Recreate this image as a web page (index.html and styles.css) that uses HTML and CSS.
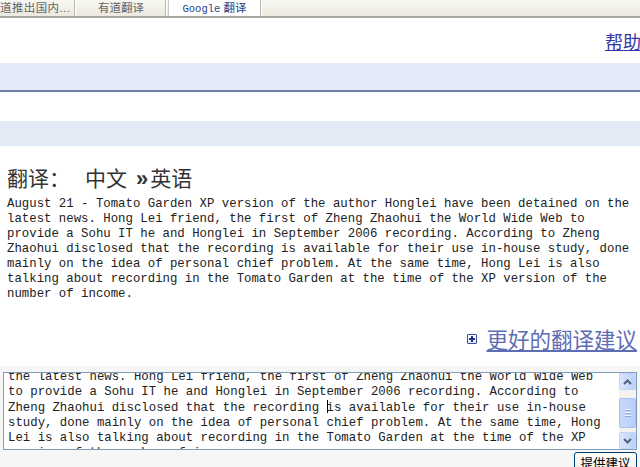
FILE: index.html
```html
<!DOCTYPE html>
<html lang="zh-CN">
<head>
    <meta charset="UTF-8">
    <title>Google 翻译</title>
    <link rel="stylesheet" href="styles.css">
</head>
<body>
    <div class="tabbar">
        <div class="tab tab-first">道推出国内...</div>
        <div class="tab">有道翻译</div>
        <div class="tab active"><span class="mono">Google</span> 翻译</div>
    </div>

    <div class="top">
        <a href="#" class="help">帮助</a>
    </div>
    <div class="band band-top"></div>
    <div class="spacer"></div>
    <div class="band band-second"></div>

    <div class="content">
        <h1 class="title">翻译：<span class="lang">中文</span><span class="arrow">»</span>英语</h1>
        <p class="result">August 21 - Tomato Garden XP version of the author Honglei have been detained on the latest news. Hong Lei friend, the first of Zheng Zhaohui the World Wide Web to provide a Sohu IT he and Honglei in September 2006 recording. According to Zheng Zhaohui disclosed that the recording is available for their use in-house study, done mainly on the idea of personal chief problem. At the same time, Hong Lei is also talking about recording in the Tomato Garden at the time of the XP version of the number of income.</p>

        <div class="suggest">
            <span class="plus"></span>
            <a href="#">更好的翻译建议</a>
        </div>
    </div>

    <div class="edit-area">
        <div class="textbox">
            <div class="textview">
                <div class="text">August 21 - Tomato Garden XP version of the author Honglei have been detained on the latest news. Hong Lei friend, the first of Zheng Zhaohui the World Wide Web to provide a Sohu IT he and Honglei in September 2006 recording. According to Zheng Zhaohui disclosed that the recording <span class="caret"></span>is available for their use in-house study, done mainly on the idea of personal chief problem. At the same time, Hong Lei is also talking about recording in the Tomato Garden at the time of the XP version of the number of income.</div>
            </div>
            <div class="scrollbar">
                <div class="sb-btn">
                    <svg width="9" height="6" viewBox="0 0 9 6"><path d="M1 5 L4.5 1.5 L8 5" fill="none" stroke="#4d6185" stroke-width="2"/></svg>
                </div>
                <div class="sb-track">
                    <div class="sb-thumb"><span></span><span></span><span></span></div>
                </div>
                <div class="sb-btn">
                    <svg width="9" height="6" viewBox="0 0 9 6"><path d="M1 1 L4.5 4.5 L8 1" fill="none" stroke="#4d6185" stroke-width="2"/></svg>
                </div>
            </div>
        </div>
        <div class="actions">
            <button type="button" class="submit">提供建议</button>
        </div>
    </div>
</body>
</html>
```

FILE: styles.css
```css
body {
    margin: 0;
    font-family: "Liberation Sans", "Noto Sans CJK SC", sans-serif;
    background: #fff;
    width: 640px;
    overflow: hidden;
}
.tabbar {
    display: flex;
    height: 16px;
    background: linear-gradient(#f8f7f2, #ebe9e0);
    border-bottom: 2px solid #a9a8a0;
    overflow: hidden;
}
.tab {
    width: 88px;
    font-size: 11.5px;
    line-height: 16px;
    color: #666;
    text-align: center;
    border-right: 1px solid #b9b8b0;
    box-shadow: 1px 0 0 #fff;
    margin-right: 2px;
    white-space: nowrap;
}
.tab-first {
    width: 74px;
    text-align: left;
    letter-spacing: 0.4px;
}
.tab.active {
    background: #fff;
    color: #26448c;
    width: 91px;
    border-left: 1px solid #c9c8c0;
}
.mono {
    font-family: "Liberation Mono", monospace;
    font-size: 10.5px;
}
.top {
    height: 45px;
    text-align: right;
}
.help {
    display: inline-block;
    margin-top: 13px;
    margin-right: -1px;
    font-size: 18px;
    line-height: 24px;
    color: #3434a6;
    text-decoration: underline;
}
.band {
    background: #e4eaf7;
}
.band-top {
    height: 27px;
    border-bottom: 2px solid #6e80a8;
}
.spacer {
    height: 29px;
}
.band-second {
    height: 25px;
    background: #e2eaf6;
}
.content {
    padding: 18px 0 0 7px;
}
.title {
    margin: 0;
    font-size: 21px;
    line-height: 26px;
    font-weight: normal;
    color: #333;
    font-family: "Noto Sans CJK SC", sans-serif;
}
.lang {
    margin-left: 15px;
}
.arrow {
    margin: 0 2px 0 9px;
    font-family: "Liberation Sans", sans-serif;
    font-weight: bold;
    font-size: 22px;
}
.result {
    margin: 5px 0 0;
    width: 84.5ch;
    font-family: "Liberation Mono", monospace;
    font-size: 12.35px;
    line-height: 15px;
    color: #222;
}
.suggest {
    display: flex;
    align-items: center;
    justify-content: flex-end;
    gap: 9px;
    margin-top: 24px;
    margin-right: 3px;
}
.suggest a {
    font-size: 21.5px;
    line-height: 26px;
    color: #5e6db4;
    text-decoration: underline;
    font-family: "Noto Sans CJK SC", sans-serif;
}
.plus {
    position: relative;
    width: 8px;
    height: 8px;
    border: 1px solid #3d4f98;
    border-radius: 1px;
    background: linear-gradient(#fff, #dfe5f4);
}
.plus::before,
.plus::after {
    content: "";
    position: absolute;
    background: #22308a;
}
.plus::before {
    left: 1px;
    top: 3px;
    width: 6px;
    height: 2px;
}
.plus::after {
    left: 3px;
    top: 1px;
    width: 2px;
    height: 6px;
}
.edit-area {
    margin-top: 14px;
    padding: 6px 3px 0;
    background: #f6f6f6;
    height: 100px;
}
.textbox {
    display: flex;
    height: 76px;
    border: 1px solid #7f9db9;
    background: #fff;
}
.textview {
    flex: 1;
    overflow: hidden;
}
.text {
    margin-top: -18px;
    padding-left: 4px;
    width: 80.5ch;
    font-family: "Liberation Mono", monospace;
    font-size: 12.35px;
    line-height: 15px;
    color: #222;
}
.caret {
    display: inline-block;
    width: 0;
    height: 13px;
    border-left: 1px solid #000;
    margin-right: -1px;
    vertical-align: -2px;
}
.scrollbar {
    width: 17px;
    display: flex;
    flex-direction: column;
    background: #f3f2ec;
}
.sb-btn {
    height: 17px;
    display: flex;
    align-items: center;
    justify-content: center;
    background: linear-gradient(90deg, #dbe6fd, #bdd0f8);
    border: 1px solid #c3d3fd;
    border-radius: 2px;
    box-sizing: border-box;
}
.sb-track {
    flex: 1;
    padding: 8px 0 4px;
}
.sb-thumb {
    height: 100%;
    display: flex;
    flex-direction: column;
    align-items: center;
    justify-content: center;
    gap: 1px;
    background: linear-gradient(90deg, #cad9fc, #b8cdf9);
    border: 1px solid #a8bff2;
    border-radius: 2px;
    box-sizing: border-box;
}
.sb-thumb span {
    width: 6px;
    height: 1px;
    background: #eef3fe;
    border-bottom: 1px solid #8ca8e8;
}
.actions {
    display: flex;
    justify-content: flex-end;
    padding-top: 2px;
}
.submit {
    width: 63px;
    height: 22px;
    padding: 0;
    font-family: "Noto Sans CJK SC", sans-serif;
    font-size: 12.5px;
    line-height: 14px;
    color: #000;
    background: linear-gradient(#fff, #ecebe6);
    border: 1px solid #003c74;
    border-radius: 3px;
    align-self: flex-start;
}
```
